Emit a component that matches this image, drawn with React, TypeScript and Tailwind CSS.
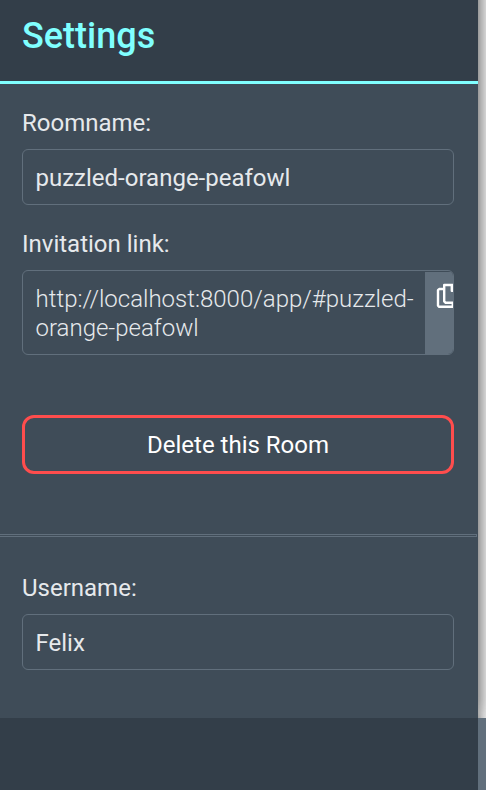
export default function App() {
  return (
    <div className="relative h-[790px] w-[486px] overflow-hidden bg-[#616f7c] font-['Roboto',sans-serif] text-[24px] leading-[29px] text-[#e6e9ec]">
      <div className="absolute left-0 top-0 h-[718px] w-full overflow-hidden bg-[#f8f8f8]">
        <div className="-mt-[30px] h-[748px] w-[478px] shadow-[0_0_18px_rgba(0,0,0,0.75)]" />
        <div className="h-[72px] w-[478px] shadow-[0_0_10px_rgba(0,0,0,0.8)]" />
      </div>
      <div className="relative flex h-full w-[478px] flex-col bg-[#333e49]">
        <header className="h-[84px] shrink-0 border-b-[3px] border-[#80ffff] px-[22px] pt-[15px]">
          <h1 className="text-[36px] font-medium leading-[42px] text-[#80ffff]">Settings</h1>
        </header>
        <main className="h-[634px] shrink-0 bg-[#3f4c58]">
          <section className="h-[450px] pl-[22px] pr-[24px] pt-[25px]">
            <label className="block">Roomname:</label>
            <div className="mt-[11px] h-[56px] rounded-[6px] border border-[#616f7c] px-[12.5px] pt-[14px]">puzzled-orange-peafowl</div>
            <label className="mt-[25px] block">Invitation link:</label>
            <div className="mt-[11px] flex h-[85px] overflow-hidden rounded-[6px] border border-[#616f7c]">
              <p className="w-[402px] shrink-0 pl-[12.5px] pt-[14px] font-light">http://localhost:8000/app/#puzzled-<br />orange-peafowl</p>
              <button className="mt-px flex w-[28px] items-start overflow-hidden bg-[#616f7c] pl-[9px] pt-[10px]" aria-label="Copy link">
                <svg className="block h-[29px] w-[29px] max-w-none shrink-0" viewBox="0 0 29 29" fill="none" stroke="#fff" strokeWidth="2.4" strokeLinejoin="round">
                  <path d="M10.2 3h9.3l4.5 4.5v13.3H11.7l-1.5-1.5zM10.2 7H5.2L4 8.2v15.4l1.2 1.2h13.6v-4M17.8 3v5.8H24" />
                </svg>
              </button>
            </div>
            <button className="mt-[60px] h-[59px] w-full rounded-[12px] border-[3px] border-[#ff4d4d] pt-[2px] text-white">Delete this Room</button>
          </section>
          <hr className="mr-px h-[3px] border border-l-0 border-[#616f7c]" />
          <section className="pl-[22px] pr-[24px] pt-[37px]">
            <label className="block">Username:</label>
            <div className="mt-[11px] h-[56px] rounded-[6px] border border-[#616f7c] px-[12.5px] pt-[14px]">Felix</div>
          </section>
        </main>
      </div>
    </div>
  );
}
